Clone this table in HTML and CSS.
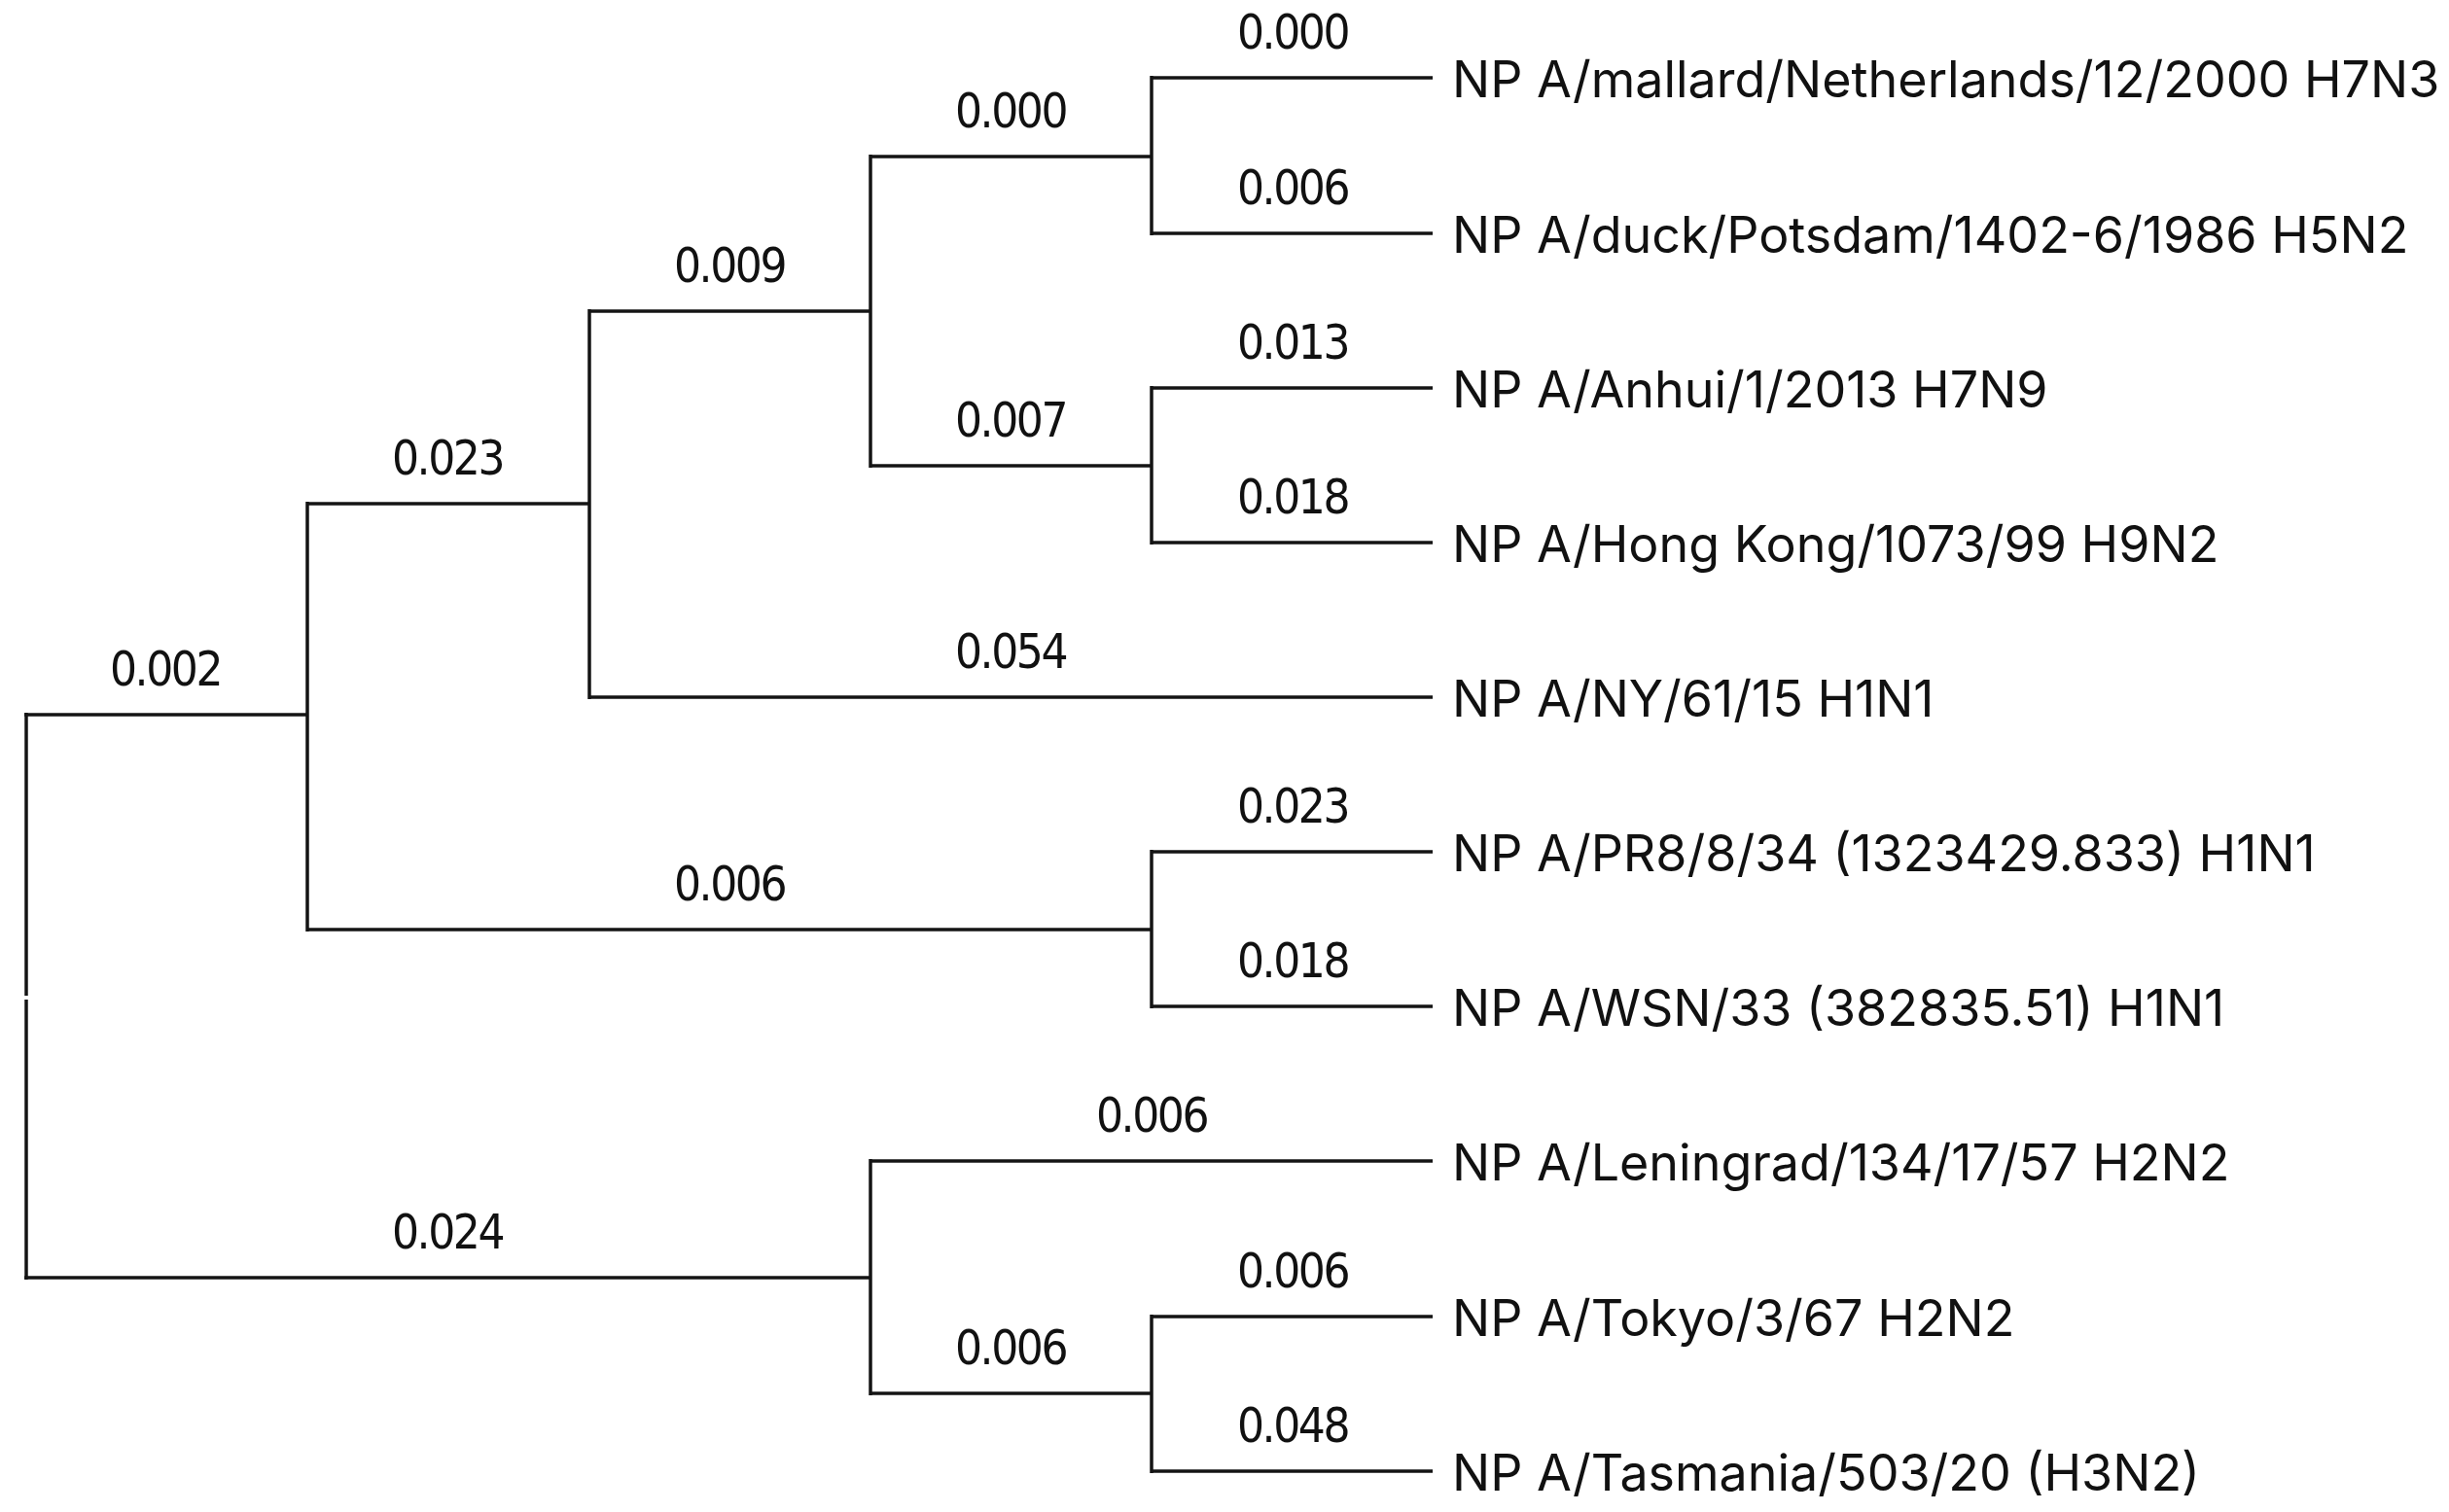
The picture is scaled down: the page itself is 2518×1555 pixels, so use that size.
FILE: index.html
```html
<!DOCTYPE html>
<html lang="en">
<head>
<meta charset="utf-8">
<title>NP phylogenetic tree</title>
<link rel="stylesheet" href="styles.css">
</head>
<body>
<svg class="tree" viewBox="0 0 2518 1555" width="2518" height="1555" xmlns="http://www.w3.org/2000/svg">
  <g class="branches">
    <!-- root -->
    <line x1="27" y1="733" x2="27" y2="1024"/>
    <line x1="27" y1="1028" x2="27" y2="1316"/>
    <line x1="25" y1="735" x2="316" y2="735"/>
    <line x1="25" y1="1314" x2="895" y2="1314"/>
    <!-- node 316 -->
    <line x1="316" y1="516" x2="316" y2="958"/>
    <line x1="316" y1="518" x2="606" y2="518"/>
    <line x1="316" y1="956" x2="1184" y2="956"/>
    <!-- node 606 -->
    <line x1="606" y1="318" x2="606" y2="719"/>
    <line x1="606" y1="320" x2="895" y2="320"/>
    <line x1="606" y1="717" x2="1473" y2="717"/>
    <!-- node 895 upper -->
    <line x1="895" y1="159" x2="895" y2="481"/>
    <line x1="895" y1="161" x2="1184" y2="161"/>
    <line x1="895" y1="479" x2="1184" y2="479"/>
    <!-- leaves pair 1 -->
    <line x1="1184" y1="78" x2="1184" y2="242"/>
    <line x1="1184" y1="80" x2="1473" y2="80"/>
    <line x1="1184" y1="240" x2="1473" y2="240"/>
    <!-- leaves pair 2 -->
    <line x1="1184" y1="397" x2="1184" y2="560"/>
    <line x1="1184" y1="399" x2="1473" y2="399"/>
    <line x1="1184" y1="558" x2="1473" y2="558"/>
    <!-- leaves pair 3 -->
    <line x1="1184" y1="874" x2="1184" y2="1037"/>
    <line x1="1184" y1="876" x2="1473" y2="876"/>
    <line x1="1184" y1="1035" x2="1473" y2="1035"/>
    <!-- node 895 lower -->
    <line x1="895" y1="1192" x2="895" y2="1435"/>
    <line x1="895" y1="1194" x2="1473" y2="1194"/>
    <line x1="895" y1="1433" x2="1184" y2="1433"/>
    <!-- leaves pair 4 -->
    <line x1="1184" y1="1352" x2="1184" y2="1515"/>
    <line x1="1184" y1="1354" x2="1473" y2="1354"/>
    <line x1="1184" y1="1513" x2="1473" y2="1513"/>
  </g>

  <g class="lengths">
    <text x="170" y="705">0.002</text>
    <text x="460" y="488">0.023</text>
    <text x="750" y="290">0.009</text>
    <text x="1039" y="131">0.000</text>
    <text x="1329" y="50">0.000</text>
    <text x="1329" y="210">0.006</text>
    <text x="1039" y="449">0.007</text>
    <text x="1329" y="369">0.013</text>
    <text x="1329" y="528">0.018</text>
    <text x="1039" y="687">0.054</text>
    <text x="750" y="926">0.006</text>
    <text x="1329" y="846">0.023</text>
    <text x="1329" y="1005">0.018</text>
    <text x="460" y="1284">0.024</text>
    <text x="1184" y="1164">0.006</text>
    <text x="1039" y="1403">0.006</text>
    <text x="1329" y="1324">0.006</text>
    <text x="1329" y="1483">0.048</text>
  </g>

  <g class="taxa">
    <text x="1493" y="100">NP A/mallard/Netherlands/12/2000 H7N3</text>
    <text x="1493" y="260">NP A/duck/Potsdam/1402-6/1986 H5N2</text>
    <text x="1493" y="419">NP A/Anhui/1/2013 H7N9</text>
    <text x="1493" y="578">NP A/Hong Kong/1073/99 H9N2</text>
    <text x="1493" y="737">NP A/NY/61/15 H1N1</text>
    <text x="1493" y="896">NP A/PR8/8/34 (1323429.833) H1N1</text>
    <text x="1493" y="1055">NP A/WSN/33 (382835.51) H1N1</text>
    <text x="1493" y="1214">NP A/Leningrad/134/17/57 H2N2</text>
    <text x="1493" y="1374">NP A/Tokyo/3/67 H2N2</text>
    <text x="1493" y="1533">NP A/Tasmania/503/20 (H3N2)</text>
  </g>
</svg>
</body>
</html>
```

FILE: styles.css
```css
html, body {
  margin: 0;
  padding: 0;
  background: #ffffff;
}

.tree {
  display: block;
  width: 2518px;
  height: 1555px;
  background: #ffffff;
}

.branches line {
  stroke: #141414;
  stroke-width: 3.5;
  fill: none;
}

.lengths text {
  font-family: "DejaVu Sans Condensed", "DejaVu Sans", sans-serif;
  font-stretch: condensed;
  font-size: 49px;
  letter-spacing: -2.4px;
  fill: #111111;
  text-anchor: middle;
}

.taxa text {
  font-family: Inter, "Liberation Sans", Arial, sans-serif;
  font-size: 52px;
  fill: #111111;
}
```
